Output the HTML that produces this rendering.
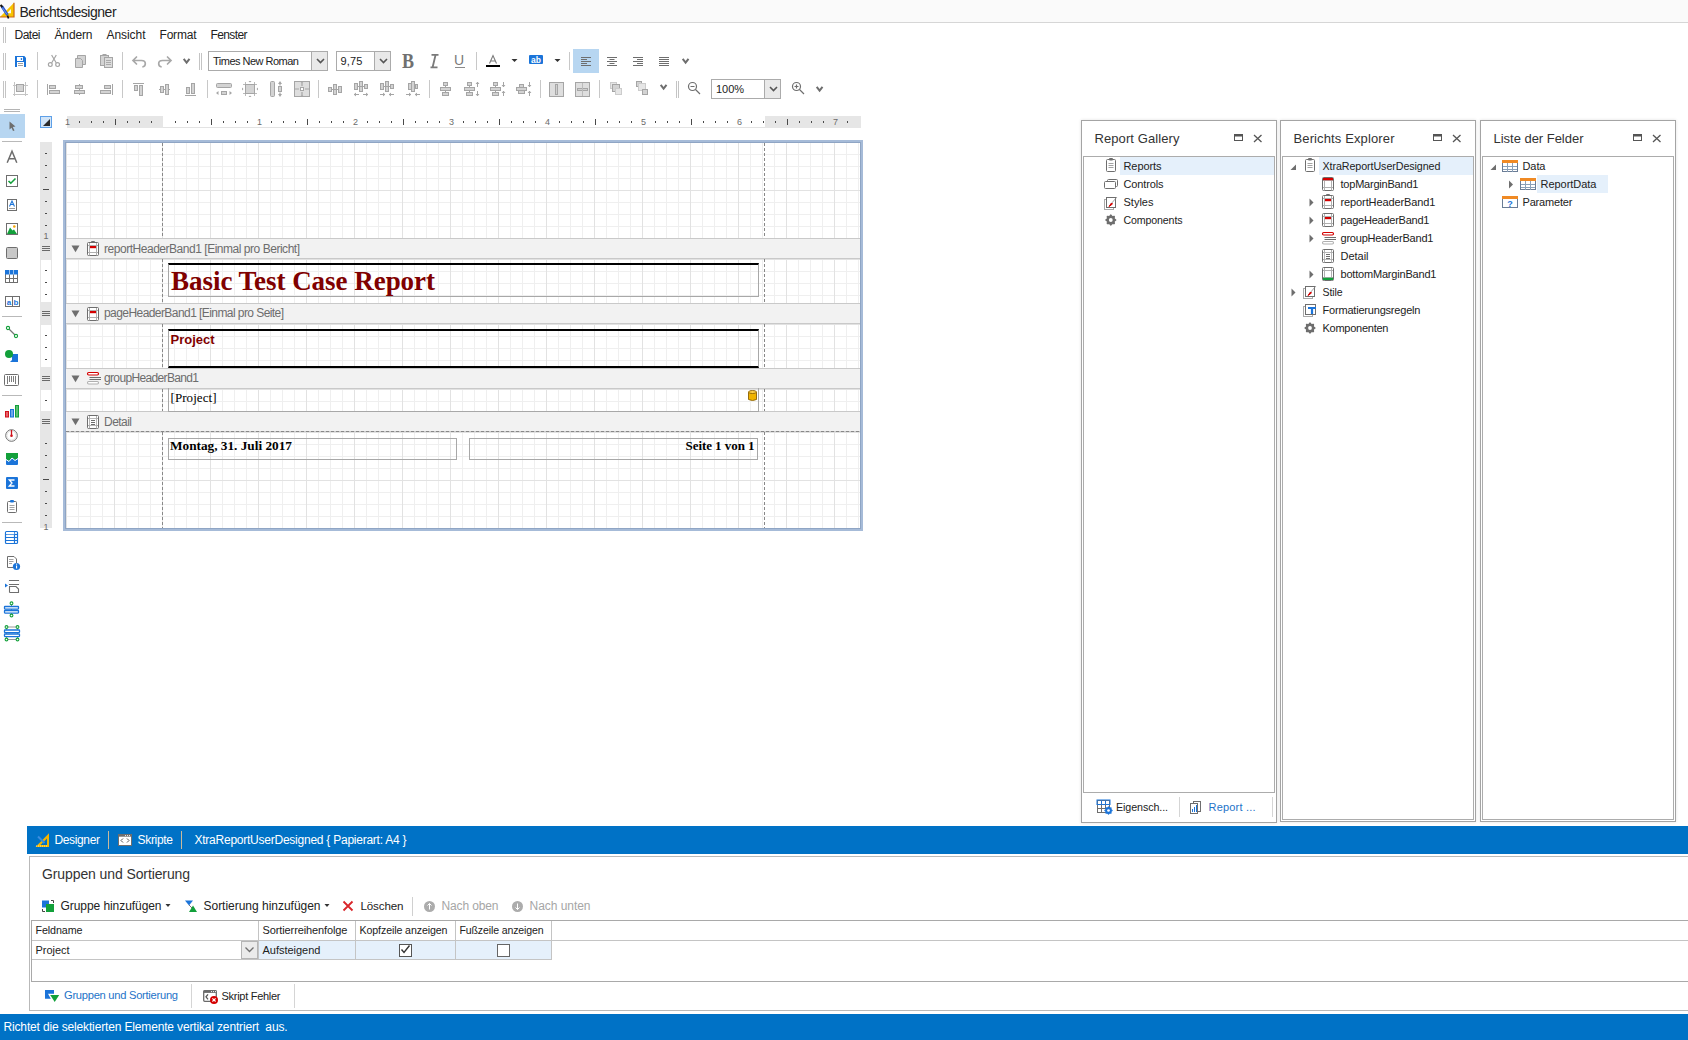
<!DOCTYPE html><html><head><meta charset="utf-8"><style>
html,body{margin:0;padding:0;}
body{width:1688px;height:1040px;position:relative;overflow:hidden;background:#fff;font-family:"Liberation Sans",sans-serif;}
div,svg{position:absolute;box-sizing:border-box;}
</style></head><body>
<div style="left:0px;top:0px;width:1688px;height:22px;background:#fafafa"></div>
<div style="left:0px;top:22px;width:1688px;height:1px;background:#d6d6d6"></div>
<div style="left:19.5px;top:4.33px;font:14px 'Liberation Sans', sans-serif;color:#222;white-space:pre;letter-spacing:-0.482px;">Berichtsdesigner</div>
<div style="left:3px;top:27px;width:1px;height:16px;background:#c4c4c4"></div>
<div style="left:5px;top:27px;width:1px;height:16px;background:#c4c4c4"></div>
<div style="left:14.5px;top:28.14px;font:12px 'Liberation Sans', sans-serif;color:#222;white-space:pre;letter-spacing:-0.504px;">Datei</div>
<div style="left:54.5px;top:28.14px;font:12px 'Liberation Sans', sans-serif;color:#222;white-space:pre;letter-spacing:-0.138px;">Ändern</div>
<div style="left:106.5px;top:28.14px;font:12px 'Liberation Sans', sans-serif;color:#222;white-space:pre;letter-spacing:-0.057px;">Ansicht</div>
<div style="left:159.5px;top:28.14px;font:12px 'Liberation Sans', sans-serif;color:#222;white-space:pre;letter-spacing:-0.200px;">Format</div>
<div style="left:210.5px;top:28.14px;font:12px 'Liberation Sans', sans-serif;color:#222;white-space:pre;letter-spacing:-0.612px;">Fenster</div>
<div style="left:3px;top:53px;width:1px;height:17px;background:#c4c4c4"></div>
<div style="left:5px;top:53px;width:1px;height:17px;background:#c4c4c4"></div>
<div style="left:199px;top:53px;width:1px;height:17px;background:#c4c4c4"></div>
<div style="left:201px;top:53px;width:1px;height:17px;background:#c4c4c4"></div>
<div style="left:37px;top:52px;width:1px;height:18px;background:#c8c8c8"></div>
<div style="left:122px;top:52px;width:1px;height:18px;background:#c8c8c8"></div>
<div style="left:476px;top:52px;width:1px;height:18px;background:#c8c8c8"></div>
<div style="left:569px;top:52px;width:1px;height:18px;background:#c8c8c8"></div>
<div style="left:3px;top:81px;width:1px;height:17px;background:#c4c4c4"></div>
<div style="left:5px;top:81px;width:1px;height:17px;background:#c4c4c4"></div>
<div style="left:676px;top:81px;width:1px;height:17px;background:#c4c4c4"></div>
<div style="left:678px;top:81px;width:1px;height:17px;background:#c4c4c4"></div>
<div style="left:37px;top:80px;width:1px;height:18px;background:#c8c8c8"></div>
<div style="left:122px;top:80px;width:1px;height:18px;background:#c8c8c8"></div>
<div style="left:207px;top:80px;width:1px;height:18px;background:#c8c8c8"></div>
<div style="left:318px;top:80px;width:1px;height:18px;background:#c8c8c8"></div>
<div style="left:429px;top:80px;width:1px;height:18px;background:#c8c8c8"></div>
<div style="left:540px;top:80px;width:1px;height:18px;background:#c8c8c8"></div>
<div style="left:599px;top:80px;width:1px;height:18px;background:#c8c8c8"></div>
<div style="left:208px;top:51px;width:120px;height:20px;border:1px solid #ababab;background:#fff"></div>
<div style="left:311px;top:51px;width:17px;height:20px;border:1px solid #ababab;background:#e9e9e9"></div>
<svg style="left:315.5px;top:58.0px" width="9" height="6" viewBox="0 0 9 6"><path d="M1 1 L4.5 4.5 L8 1" stroke="#555" stroke-width="1.6" fill="none"/></svg>
<div style="left:213px;top:55.05px;font:11px 'Liberation Sans', sans-serif;color:#222;white-space:pre;letter-spacing:-0.509px;">Times New Roman</div>
<div style="left:336px;top:51px;width:55px;height:20px;border:1px solid #ababab;background:#fff"></div>
<div style="left:374px;top:51px;width:17px;height:20px;border:1px solid #ababab;background:#e9e9e9"></div>
<svg style="left:378.5px;top:58.0px" width="9" height="6" viewBox="0 0 9 6"><path d="M1 1 L4.5 4.5 L8 1" stroke="#555" stroke-width="1.6" fill="none"/></svg>
<div style="left:340.5px;top:55.05px;font:11px 'Liberation Sans', sans-serif;color:#222;white-space:pre;letter-spacing:0.188px;">9,75</div>
<div style="left:711px;top:79px;width:70px;height:20px;border:1px solid #ababab;background:#fff"></div>
<div style="left:764px;top:79px;width:17px;height:20px;border:1px solid #ababab;background:#e9e9e9"></div>
<svg style="left:768.5px;top:86.0px" width="9" height="6" viewBox="0 0 9 6"><path d="M1 1 L4.5 4.5 L8 1" stroke="#555" stroke-width="1.6" fill="none"/></svg>
<div style="left:716px;top:83.05px;font:11px 'Liberation Sans', sans-serif;color:#222;white-space:pre;letter-spacing:-0.052px;">100%</div>
<div style="left:573px;top:49px;width:26px;height:24px;background:#b7d6f1"></div>
<div style="left:4px;top:109px;width:16px;height:1px;background:#b4b4b4"></div>
<div style="left:4px;top:111px;width:16px;height:1px;background:#b4b4b4"></div>
<div style="left:0px;top:114px;width:25px;height:24px;background:#b7d6f1"></div>
<div style="left:2px;top:141px;width:20px;height:1px;background:#b9b9b9"></div>
<div style="left:2px;top:316px;width:20px;height:1px;background:#b9b9b9"></div>
<div style="left:2px;top:395px;width:20px;height:1px;background:#b9b9b9"></div>
<div style="left:2px;top:522px;width:20px;height:1px;background:#b9b9b9"></div>
<div style="left:40px;top:116px;width:12px;height:12px;background:#cfe3f7;border:1px solid #5b9bd5"></div>
<div style="left:67px;top:116px;width:794px;height:12px;background:#fff;border-bottom:1px solid #e3e3e3"></div>
<div style="left:67px;top:116px;width:96px;height:12px;background:#e6e6e6"></div>
<div style="left:765px;top:116px;width:96px;height:12px;background:#e6e6e6"></div>
<div style="left:40px;top:142px;width:12px;height:386px;background:#e6e6e6"></div>
<div style="left:41px;top:260px;width:10px;height:42px;background:#fff"></div>
<div style="left:41px;top:325px;width:10px;height:42px;background:#fff"></div>
<div style="left:41px;top:390px;width:10px;height:21px;background:#fff"></div>
<div style="left:63px;top:140px;width:800px;height:391px;border:2px solid #a6bbd8;box-shadow:inset 0 0 0 1px #8fa5c4;background:#fff"></div>
<div style="left:66px;top:143px;width:794px;height:95px;background-image:linear-gradient(to right,#e2e2e2 1px,transparent 1px),linear-gradient(to bottom,#e2e2e2 1px,transparent 1px),linear-gradient(to right,#efefef 1px,transparent 1px),linear-gradient(to bottom,#efefef 1px,transparent 1px);background-size:48px 100%,100% 48px,12px 100%,100% 12px;background-position:0 0,0 -1px,0 0,0 -1px"></div>
<div style="left:66px;top:259px;width:794px;height:44px;background-image:linear-gradient(to right,#e2e2e2 1px,transparent 1px),linear-gradient(to bottom,#e2e2e2 1px,transparent 1px),linear-gradient(to right,#efefef 1px,transparent 1px),linear-gradient(to bottom,#efefef 1px,transparent 1px);background-size:48px 100%,100% 48px,12px 100%,100% 12px;background-position:0 0,0 0px,0 0,0 0px"></div>
<div style="left:66px;top:324px;width:794px;height:44px;background-image:linear-gradient(to right,#e2e2e2 1px,transparent 1px),linear-gradient(to bottom,#e2e2e2 1px,transparent 1px),linear-gradient(to right,#efefef 1px,transparent 1px),linear-gradient(to bottom,#efefef 1px,transparent 1px);background-size:48px 100%,100% 48px,12px 100%,100% 12px;background-position:0 0,0 0px,0 0,0 0px"></div>
<div style="left:66px;top:389px;width:794px;height:22px;background-image:linear-gradient(to right,#e2e2e2 1px,transparent 1px),linear-gradient(to bottom,#e2e2e2 1px,transparent 1px),linear-gradient(to right,#efefef 1px,transparent 1px),linear-gradient(to bottom,#efefef 1px,transparent 1px);background-size:48px 100%,100% 48px,12px 100%,100% 12px;background-position:0 0,0 0px,0 0,0 0px"></div>
<div style="left:66px;top:432px;width:794px;height:96px;background-image:linear-gradient(to right,#e2e2e2 1px,transparent 1px),linear-gradient(to bottom,#e2e2e2 1px,transparent 1px),linear-gradient(to right,#efefef 1px,transparent 1px),linear-gradient(to bottom,#efefef 1px,transparent 1px);background-size:48px 100%,100% 48px,12px 100%,100% 12px;background-position:0 0,0 0px,0 0,0 0px"></div>
<div style="left:66px;top:238px;width:794px;height:21px;background:#f2f2f2;border-top:1px solid #c9c9c9;border-bottom:1px solid #c9c9c9"></div>
<svg style="left:71px;top:245px" width="9" height="8" viewBox="0 0 9 8"><path d="M0.5 0.5 H8.5 L4.5 7.2 Z" fill="#6e6e6e"/></svg>
<div style="left:66px;top:303px;width:794px;height:21px;background:#f2f2f2;border-top:1px solid #c9c9c9;border-bottom:1px solid #c9c9c9"></div>
<svg style="left:71px;top:310px" width="9" height="8" viewBox="0 0 9 8"><path d="M0.5 0.5 H8.5 L4.5 7.2 Z" fill="#6e6e6e"/></svg>
<div style="left:66px;top:368px;width:794px;height:21px;background:#f2f2f2;border-top:1px solid #c9c9c9;border-bottom:1px solid #c9c9c9"></div>
<svg style="left:71px;top:375px" width="9" height="8" viewBox="0 0 9 8"><path d="M0.5 0.5 H8.5 L4.5 7.2 Z" fill="#6e6e6e"/></svg>
<div style="left:66px;top:411px;width:794px;height:21px;background:#f2f2f2;border-top:1px solid #c9c9c9;border-bottom:1px solid #c9c9c9"></div>
<svg style="left:71px;top:418px" width="9" height="8" viewBox="0 0 9 8"><path d="M0.5 0.5 H8.5 L4.5 7.2 Z" fill="#6e6e6e"/></svg>
<div style="left:162px;top:143px;width:1px;height:95px;background:repeating-linear-gradient(to bottom,#888888 0 3px,transparent 3px 5px)"></div>
<div style="left:764px;top:143px;width:1px;height:95px;background:repeating-linear-gradient(to bottom,#888888 0 3px,transparent 3px 5px)"></div>
<div style="left:162px;top:259px;width:1px;height:44px;background:repeating-linear-gradient(to bottom,#888888 0 3px,transparent 3px 5px)"></div>
<div style="left:764px;top:259px;width:1px;height:44px;background:repeating-linear-gradient(to bottom,#888888 0 3px,transparent 3px 5px)"></div>
<div style="left:162px;top:324px;width:1px;height:44px;background:repeating-linear-gradient(to bottom,#888888 0 3px,transparent 3px 5px)"></div>
<div style="left:764px;top:324px;width:1px;height:44px;background:repeating-linear-gradient(to bottom,#888888 0 3px,transparent 3px 5px)"></div>
<div style="left:162px;top:389px;width:1px;height:22px;background:repeating-linear-gradient(to bottom,#888888 0 3px,transparent 3px 5px)"></div>
<div style="left:764px;top:389px;width:1px;height:22px;background:repeating-linear-gradient(to bottom,#888888 0 3px,transparent 3px 5px)"></div>
<div style="left:162px;top:432px;width:1px;height:96px;background:repeating-linear-gradient(to bottom,#888888 0 3px,transparent 3px 5px)"></div>
<div style="left:764px;top:432px;width:1px;height:96px;background:repeating-linear-gradient(to bottom,#888888 0 3px,transparent 3px 5px)"></div>
<div style="left:66px;top:431px;width:794px;height:1px;background:repeating-linear-gradient(to right,#888888 0 3px,transparent 3px 5px)"></div>
<div style="left:104px;top:242.14px;font:12px 'Liberation Sans', sans-serif;color:#6d6d6d;white-space:pre;letter-spacing:-0.470px;">reportHeaderBand1 [Einmal pro Bericht]</div>
<div style="left:104px;top:306.14px;font:12px 'Liberation Sans', sans-serif;color:#6d6d6d;white-space:pre;letter-spacing:-0.568px;">pageHeaderBand1 [Einmal pro Seite]</div>
<div style="left:104px;top:371.14px;font:12px 'Liberation Sans', sans-serif;color:#6d6d6d;white-space:pre;letter-spacing:-0.649px;">groupHeaderBand1</div>
<div style="left:104px;top:415.14px;font:12px 'Liberation Sans', sans-serif;color:#6d6d6d;white-space:pre;letter-spacing:-0.537px;">Detail</div>
<div style="left:168px;top:263px;width:591px;height:34px;border:1px solid #a8a8a8;border-top:2px solid #000"></div>
<div style="left:171px;top:266.24px;font:bold 27px 'Liberation Serif', serif;color:#800000;white-space:pre;letter-spacing:-0.034px;">Basic Test Case Report</div>
<div style="left:168px;top:329px;width:591px;height:39px;border:1px solid #a8a8a8;border-top:2px solid #000;border-bottom:2px solid #000"></div>
<div style="left:170.5px;top:331.74px;font:bold 13px 'Liberation Sans', sans-serif;color:#800000;white-space:pre;letter-spacing:-0.013px;">Project</div>
<div style="left:168px;top:388px;width:591px;height:24px;border:1px solid #a8a8a8;border-top:none"></div>
<div style="left:170.5px;top:390.42px;font:13px 'Liberation Serif', serif;color:#000;white-space:pre;letter-spacing:0.066px;">[Project]</div>
<div style="left:168px;top:438px;width:289px;height:22px;border:1px solid #a8a8a8"></div>
<div style="left:170px;top:438.15px;font:bold 13.3px 'Liberation Serif', serif;color:#000;white-space:pre;letter-spacing:-0.016px;">Montag, 31. Juli 2017</div>
<div style="left:469px;top:438px;width:289px;height:22px;border:1px solid #a8a8a8"></div>
<div style="left:685.5px;top:438.42px;font:bold 13px 'Liberation Serif', serif;color:#000;white-space:pre;letter-spacing:-0.057px;">Seite 1 von 1</div>
<div style="left:1081px;top:120px;width:196px;height:703px;border:1px solid #a4a4a4;background:#fff;box-shadow:0 0 3px rgba(0,0,0,0.12)"></div>
<div style="left:1083px;top:156px;width:192px;height:637px;border:1px solid #acacac;background:#fff"></div>
<div style="left:1094.5px;top:131.24px;font:13px 'Liberation Sans', sans-serif;color:#333;white-space:pre;letter-spacing:0.090px;">Report Gallery</div>
<svg style="left:1234px;top:134px" width="10" height="8" viewBox="0 0 10 8"><rect x="0.5" y="0.5" width="8" height="6" fill="none" stroke="#555"/><rect x="0.5" y="0.5" width="8" height="2" fill="#555"/></svg>
<svg style="left:1253px;top:134px" width="10" height="9" viewBox="0 0 10 9"><path d="M1 1 L8.5 8 M8.5 1 L1 8" stroke="#555" stroke-width="1.3"/></svg>
<div style="left:1280px;top:120px;width:196px;height:702px;border:1px solid #a4a4a4;background:#fff;box-shadow:0 0 3px rgba(0,0,0,0.12)"></div>
<div style="left:1282px;top:156px;width:192px;height:664px;border:1px solid #acacac;background:#fff"></div>
<div style="left:1293.5px;top:131.24px;font:13px 'Liberation Sans', sans-serif;color:#333;white-space:pre;letter-spacing:0.125px;">Berichts Explorer</div>
<svg style="left:1433px;top:134px" width="10" height="8" viewBox="0 0 10 8"><rect x="0.5" y="0.5" width="8" height="6" fill="none" stroke="#555"/><rect x="0.5" y="0.5" width="8" height="2" fill="#555"/></svg>
<svg style="left:1452px;top:134px" width="10" height="9" viewBox="0 0 10 9"><path d="M1 1 L8.5 8 M8.5 1 L1 8" stroke="#555" stroke-width="1.3"/></svg>
<div style="left:1480px;top:120px;width:196px;height:702px;border:1px solid #a4a4a4;background:#fff;box-shadow:0 0 3px rgba(0,0,0,0.12)"></div>
<div style="left:1482px;top:156px;width:192px;height:664px;border:1px solid #acacac;background:#fff"></div>
<div style="left:1493.5px;top:131.24px;font:13px 'Liberation Sans', sans-serif;color:#333;white-space:pre;letter-spacing:-0.023px;">Liste der Felder</div>
<svg style="left:1633px;top:134px" width="10" height="8" viewBox="0 0 10 8"><rect x="0.5" y="0.5" width="8" height="6" fill="none" stroke="#555"/><rect x="0.5" y="0.5" width="8" height="2" fill="#555"/></svg>
<svg style="left:1652px;top:134px" width="10" height="9" viewBox="0 0 10 9"><path d="M1 1 L8.5 8 M8.5 1 L1 8" stroke="#555" stroke-width="1.3"/></svg>
<div style="left:1120px;top:157px;width:154px;height:18px;background:#e5f0fb"></div>
<div style="left:1319px;top:157px;width:154px;height:18px;background:#e5f0fb"></div>
<div style="left:1537px;top:175px;width:71px;height:18px;background:#e5f0fb"></div>
<div style="left:1123.5px;top:160.04px;font:11px 'Liberation Sans', sans-serif;color:#222;white-space:pre;letter-spacing:-0.089px;">Reports</div>
<div style="left:1123.5px;top:178.04px;font:11px 'Liberation Sans', sans-serif;color:#222;white-space:pre;letter-spacing:-0.138px;">Controls</div>
<div style="left:1123.5px;top:196.04px;font:11px 'Liberation Sans', sans-serif;color:#222;white-space:pre;letter-spacing:0.006px;">Styles</div>
<div style="left:1123.5px;top:214.37px;font:10.64px 'Liberation Sans', sans-serif;color:#222;white-space:pre;letter-spacing:-0.135px;">Components</div>
<div style="left:1322.5px;top:160.29px;font:10.73px 'Liberation Sans', sans-serif;color:#222;white-space:pre;letter-spacing:-0.086px;">XtraReportUserDesigned</div>
<div style="left:1340.5px;top:178.04px;font:11px 'Liberation Sans', sans-serif;color:#222;white-space:pre;letter-spacing:-0.214px;">topMarginBand1</div>
<div style="left:1340.5px;top:196.04px;font:11px 'Liberation Sans', sans-serif;color:#222;white-space:pre;letter-spacing:-0.105px;">reportHeaderBand1</div>
<div style="left:1340.5px;top:214.04px;font:11px 'Liberation Sans', sans-serif;color:#222;white-space:pre;letter-spacing:-0.246px;">pageHeaderBand1</div>
<div style="left:1340.5px;top:232.04px;font:11px 'Liberation Sans', sans-serif;color:#222;white-space:pre;letter-spacing:-0.206px;">groupHeaderBand1</div>
<div style="left:1340.5px;top:250.04px;font:11px 'Liberation Sans', sans-serif;color:#222;white-space:pre;letter-spacing:-0.025px;">Detail</div>
<div style="left:1340.5px;top:268.05px;font:11px 'Liberation Sans', sans-serif;color:#222;white-space:pre;letter-spacing:-0.195px;">bottomMarginBand1</div>
<div style="left:1322.5px;top:286.44px;font:10.56px 'Liberation Sans', sans-serif;color:#222;white-space:pre;letter-spacing:-0.129px;">Stile</div>
<div style="left:1322.5px;top:304.05px;font:11px 'Liberation Sans', sans-serif;color:#222;white-space:pre;letter-spacing:-0.196px;">Formatierungsregeln</div>
<div style="left:1322.5px;top:322.05px;font:11px 'Liberation Sans', sans-serif;color:#222;white-space:pre;letter-spacing:-0.256px;">Komponenten</div>
<div style="left:1522.5px;top:160.04px;font:11px 'Liberation Sans', sans-serif;color:#222;white-space:pre;letter-spacing:-0.083px;">Data</div>
<div style="left:1540.5px;top:178.04px;font:11px 'Liberation Sans', sans-serif;color:#222;white-space:pre;letter-spacing:-0.031px;">ReportData</div>
<div style="left:1522.5px;top:196.04px;font:11px 'Liberation Sans', sans-serif;color:#222;white-space:pre;letter-spacing:-0.172px;">Parameter</div>
<div style="left:1116px;top:801.32px;font:10.7px 'Liberation Sans', sans-serif;color:#222;white-space:pre;letter-spacing:-0.084px;">Eigensch...</div>
<div style="left:1179px;top:797px;width:1px;height:20px;background:#d5d5d5"></div>
<div style="left:1208.5px;top:801.04px;font:11px 'Liberation Sans', sans-serif;color:#1e73c8;white-space:pre;letter-spacing:0.191px;">Report ...</div>
<div style="left:1272px;top:797px;width:1px;height:20px;background:#d5d5d5"></div>
<div style="left:27px;top:826px;width:1661px;height:28px;background:#0072c6"></div>
<div style="left:54.5px;top:833.14px;font:12px 'Liberation Sans', sans-serif;color:#fff;white-space:pre;letter-spacing:-0.362px;">Designer</div>
<div style="left:108px;top:831px;width:1px;height:18px;background:#c8b99c"></div>
<div style="left:137.5px;top:833.14px;font:12px 'Liberation Sans', sans-serif;color:#fff;white-space:pre;letter-spacing:-0.307px;">Skripte</div>
<div style="left:181px;top:831px;width:1px;height:18px;background:#c8b99c"></div>
<div style="left:194.5px;top:833.14px;font:12px 'Liberation Sans', sans-serif;color:#fff;white-space:pre;letter-spacing:-0.242px;">XtraReportUserDesigned { Papierart: A4 }</div>
<div style="left:29px;top:856px;width:1680px;height:155px;border:1px solid #b9b9b9;border-right:none;background:#fff"></div>
<div style="left:42px;top:866.33px;font:14px 'Liberation Sans', sans-serif;color:#333;white-space:pre;letter-spacing:-0.102px;">Gruppen und Sortierung</div>
<div style="left:60.5px;top:899.14px;font:12px 'Liberation Sans', sans-serif;color:#222;white-space:pre;letter-spacing:-0.065px;">Gruppe hinzufügen</div>
<div style="left:203.5px;top:899.14px;font:12px 'Liberation Sans', sans-serif;color:#222;white-space:pre;letter-spacing:-0.020px;">Sortierung hinzufügen</div>
<div style="left:360.5px;top:899.48px;font:11.62px 'Liberation Sans', sans-serif;color:#222;white-space:pre;letter-spacing:-0.148px;">Löschen</div>
<div style="left:412px;top:897px;width:1px;height:19px;background:#d0d0d0"></div>
<div style="left:441.5px;top:899.14px;font:12px 'Liberation Sans', sans-serif;color:#a6a6a6;white-space:pre;letter-spacing:-0.129px;">Nach oben</div>
<div style="left:529.5px;top:899.14px;font:12px 'Liberation Sans', sans-serif;color:#a6a6a6;white-space:pre;letter-spacing:-0.040px;">Nach unten</div>
<div style="left:31px;top:920px;width:1657px;height:62px;border:1px solid #a9a9a9;border-right:none;background:#fff"></div>
<div style="left:32px;top:940px;width:1656px;height:1px;background:#c4c4c4"></div>
<div style="left:258px;top:941px;width:294px;height:18px;background:#e5f0fb"></div>
<div style="left:32px;top:959px;width:520px;height:1px;background:#c4c4c4"></div>
<div style="left:258px;top:921px;width:1px;height:38px;background:#c4c4c4"></div>
<div style="left:355px;top:921px;width:1px;height:38px;background:#c4c4c4"></div>
<div style="left:455px;top:921px;width:1px;height:38px;background:#c4c4c4"></div>
<div style="left:551px;top:921px;width:1px;height:38px;background:#c4c4c4"></div>
<div style="left:35.5px;top:924.28px;font:10.74px 'Liberation Sans', sans-serif;color:#222;white-space:pre;letter-spacing:-0.105px;">Feldname</div>
<div style="left:262.5px;top:924.04px;font:11px 'Liberation Sans', sans-serif;color:#222;white-space:pre;letter-spacing:-0.110px;">Sortierreihenfolge</div>
<div style="left:359.5px;top:924.37px;font:10.64px 'Liberation Sans', sans-serif;color:#222;white-space:pre;letter-spacing:-0.104px;">Kopfzeile anzeigen</div>
<div style="left:459.5px;top:924.44px;font:10.56px 'Liberation Sans', sans-serif;color:#222;white-space:pre;letter-spacing:-0.134px;">Fußzeile anzeigen</div>
<div style="left:35.5px;top:944.04px;font:11px 'Liberation Sans', sans-serif;color:#222;white-space:pre;letter-spacing:-0.042px;">Project</div>
<div style="left:262.5px;top:944.04px;font:11px 'Liberation Sans', sans-serif;color:#222;white-space:pre;letter-spacing:-0.016px;">Aufsteigend</div>
<div style="left:241px;top:941px;width:17px;height:18px;border:1px solid #b5b5b5;background:#ebebeb"></div>
<div style="left:399px;top:944px;width:13px;height:13px;border:1px solid #555;background:#fff"></div>
<div style="left:497px;top:944px;width:13px;height:13px;border:1px solid #666;background:#fff"></div>
<div style="left:64px;top:989.40px;font:11.16px 'Liberation Sans', sans-serif;color:#1e73c8;white-space:pre;letter-spacing:-0.270px;">Gruppen und Sortierung</div>
<div style="left:191px;top:984px;width:1px;height:24px;background:#d5d5d5"></div>
<div style="left:221.5px;top:989.53px;font:11.02px 'Liberation Sans', sans-serif;color:#222;white-space:pre;letter-spacing:-0.289px;">Skript Fehler</div>
<div style="left:294px;top:984px;width:1px;height:24px;background:#d5d5d5"></div>
<div style="left:0px;top:1014px;width:1688px;height:26px;background:#0072c6"></div>
<div style="left:3.5px;top:1019.64px;font:12px 'Liberation Sans', sans-serif;color:#fff;white-space:pre;letter-spacing:-0.153px;">Richtet die selektierten Elemente vertikal zentriert  aus.</div>
<div style="left:401.5px;top:50.18px;font:bold 20px 'Liberation Serif', serif;color:#707070;white-space:pre;transform:scaleX(0.9);transform-origin:left">B</div>
<div style="left:454px;top:52.33px;font:14px 'Liberation Sans', sans-serif;color:#7a7a7a;white-space:pre;">U</div>
<svg style="left:0;top:0" width="1688" height="1040"><path d="M0 17 L14 2.8 V17 Z" fill="#f7c400"/><path d="M14 2.8 V17 H0" stroke="#c8641a" stroke-width="1.2" fill="none"/><path d="M6.8 13.2 L11 9 V13.2 Z" fill="#f9f9f9"/><path d="M2 6.5 L7.5 15" stroke="#2553c9" stroke-width="2.8"/><path d="M2.3 7.5 L7 14.5" stroke="#7fa6f0" stroke-width="0.8"/><path d="M0.5 5 L2.5 7" stroke="#111" stroke-width="2.2"/><path d="M7.5 15.5 L8.5 18.5" stroke="#111" stroke-width="1.6"/><path d="M15 56 H24.3 L26 57.7 V67 H15 Z" fill="#1b74d9"/><rect x="17" y="57" width="6" height="4" fill="#fff"/><rect x="20.8" y="58" width="1.3" height="2.1" rx="0.6" fill="#1b74d9"/><rect x="17" y="62" width="7" height="5" fill="#fff"/><rect x="18" y="63" width="5" height="1" fill="#a0a0a0"/><rect x="18" y="65" width="5" height="1" fill="#a0a0a0"/><g stroke="#a5a5a5" stroke-width="1.2" fill="none"><circle cx="50.3" cy="64.6" r="1.9"/><circle cx="57.6" cy="64.6" r="1.9"/><path d="M51.6 63 L56.3 55 M56.3 63 L51.6 55"/></g><g stroke="#a5a5a5" stroke-width="1" fill="#d3d3d3"><path d="M77.5 55.5 H85.5 V64.5 H77.5 Z"/><path d="M75.5 58.5 H80.5 L82.5 60.5 V67.5 H75.5 Z"/></g><g stroke="#a5a5a5" stroke-width="1" fill="#d3d3d3"><rect x="100.5" y="55.5" width="8" height="10"/><rect x="102.5" y="54" width="4" height="2" fill="#a5a5a5" stroke="none"/><rect x="104.5" y="57.5" width="8" height="10" fill="#dcdcdc"/></g><g stroke="#a5a5a5" stroke-width="0.9"><path d="M106 60.5 H111 M106 62.5 H111 M106 64.5 H111"/></g><g stroke="#a8a8a8" stroke-width="1.7" fill="none" stroke-linecap="round"><path d="M136.5 57 L133 60.5 L136.5 64 M133.5 60.5 H141.5 Q145.3 60.5 145.3 63.7 Q145.3 66 143 66.8"/><path d="M167.5 57 L171 60.5 L167.5 64 M170.5 60.5 H162.5 Q158.7 60.5 158.7 63.7 Q158.7 66 161 66.8"/></g><path d="M183.7 58.8 L186.6 62.6 L189.5 58.8" stroke="#6e6e6e" stroke-width="2" fill="none"/><path d="M682.7 58.8 L685.6 62.6 L688.5 58.8" stroke="#6e6e6e" stroke-width="2" fill="none"/><path d="M660.7 84.8 L663.6 88.6 L666.5 84.8" stroke="#6e6e6e" stroke-width="2" fill="none"/><path d="M816.7 86.8 L819.6 90.6 L822.5 86.8" stroke="#6e6e6e" stroke-width="2" fill="none"/><rect x="455" y="67" width="10" height="1" fill="#8a8a8a"/><rect x="486" y="65" width="14" height="2" fill="#000"/><path d="M489.5 63.5 L493 55.5 L496.5 63.5 M490.8 61 H495.2" stroke="#7a7a7a" stroke-width="1.1" fill="none"/><path d="M511.5 59 H517.5 L514.5 62 Z" fill="#333"/><path d="M554.5 59 H560.5 L557.5 62 Z" fill="#333"/><rect x="529" y="55" width="14" height="9" rx="1" fill="#1b74d9"/><rect x="581" y="57" width="10" height="1" fill="#6e6e6e"/><rect x="581" y="59" width="6" height="1" fill="#6e6e6e"/><rect x="581" y="61" width="10" height="1" fill="#6e6e6e"/><rect x="581" y="63" width="6" height="1" fill="#6e6e6e"/><rect x="581" y="65" width="10" height="1" fill="#6e6e6e"/><rect x="607" y="57" width="10" height="1" fill="#6e6e6e"/><rect x="609.5" y="59" width="5" height="1" fill="#6e6e6e"/><rect x="607" y="61" width="10" height="1" fill="#6e6e6e"/><rect x="609.5" y="63" width="5" height="1" fill="#6e6e6e"/><rect x="607" y="65" width="10" height="1" fill="#6e6e6e"/><rect x="633" y="57" width="10" height="1" fill="#6e6e6e"/><rect x="637" y="59" width="6" height="1" fill="#6e6e6e"/><rect x="633" y="61" width="10" height="1" fill="#6e6e6e"/><rect x="637" y="63" width="6" height="1" fill="#6e6e6e"/><rect x="633" y="65" width="10" height="1" fill="#6e6e6e"/><rect x="659" y="57" width="10" height="1" fill="#6e6e6e"/><rect x="659" y="59" width="10" height="1" fill="#6e6e6e"/><rect x="659" y="61" width="10" height="1" fill="#6e6e6e"/><rect x="659" y="63" width="10" height="1" fill="#6e6e6e"/><rect x="659" y="65" width="10" height="1" fill="#6e6e6e"/><rect x="16.5" y="84.5" width="7" height="7" fill="#d3d3d3" stroke="#a5a5a5"/><path d="M13 85.5 L28 85.5" stroke="#c4c4c4" stroke-width="1"/><path d="M13 94.5 L28 94.5" stroke="#c4c4c4" stroke-width="1"/><path d="M14.5 82 L14.5 96" stroke="#c4c4c4" stroke-width="1"/><path d="M25.5 82 L25.5 96" stroke="#c4c4c4" stroke-width="1"/><rect x="16.5" y="84.5" width="7" height="7" fill="#d3d3d3" stroke="#a5a5a5"/><path d="M47.5 84 L47.5 95" stroke="#a5a5a5" stroke-width="1"/><rect x="49.5" y="85.5" width="6" height="3" fill="#d3d3d3" stroke="#a5a5a5"/><rect x="49.5" y="90.5" width="10" height="3" fill="#d3d3d3" stroke="#a5a5a5"/><path d="M79.5 84 L79.5 95" stroke="#a5a5a5" stroke-width="1"/><rect x="75.5" y="85.5" width="7" height="3" fill="#d3d3d3" stroke="#a5a5a5"/><rect x="74.5" y="90.5" width="10" height="3" fill="#d3d3d3" stroke="#a5a5a5"/><path d="M112.5 84 L112.5 95" stroke="#a5a5a5" stroke-width="1"/><rect x="104.5" y="85.5" width="6" height="3" fill="#d3d3d3" stroke="#a5a5a5"/><rect x="100.5" y="90.5" width="10" height="3" fill="#d3d3d3" stroke="#a5a5a5"/><path d="M133 83.5 L144 83.5" stroke="#a5a5a5" stroke-width="1"/><rect x="134.5" y="85.5" width="3" height="5" fill="#d3d3d3" stroke="#a5a5a5"/><rect x="139.5" y="85.5" width="3" height="10" fill="#d3d3d3" stroke="#a5a5a5"/><path d="M159 89.5 L170 89.5" stroke="#a5a5a5" stroke-width="1"/><rect x="160.5" y="86.5" width="3" height="6" fill="#d3d3d3" stroke="#a5a5a5"/><rect x="165.5" y="84.5" width="3" height="10" fill="#d3d3d3" stroke="#a5a5a5"/><path d="M185 95.5 L196 95.5" stroke="#a5a5a5" stroke-width="1"/><rect x="186.5" y="87.5" width="3" height="6" fill="#d3d3d3" stroke="#a5a5a5"/><rect x="191.5" y="83.5" width="3" height="10" fill="#d3d3d3" stroke="#a5a5a5"/><rect x="216.5" y="83.5" width="15" height="4" rx="1" fill="#d3d3d3" stroke="#a5a5a5"/><rect x="221.5" y="91.5" width="5" height="3" fill="#d3d3d3" stroke="#a5a5a5"/><path d="M216 93 L218.5 91 V95 Z M232 93 L229.5 91 V95 Z" fill="#a5a5a5"/><path d="M243 84.5 H257 M243 93.5 H257 M245.5 82 V96 M254.5 82 V96" stroke="#bbbbbb" stroke-width="1"/><rect x="245.5" y="84.5" width="9" height="9" fill="#d3d3d3" stroke="#a5a5a5"/><path d="M248.5 81 H251.5 L250 82.5 Z M248.5 97 H251.5 L250 95.5 Z M242 87.5 V90.5 L243.5 89 Z M258 87.5 V90.5 L256.5 89 Z" fill="#a5a5a5"/><rect x="270.5" y="81.5" width="4" height="15" rx="1" fill="#d3d3d3" stroke="#a5a5a5"/><rect x="278.5" y="86.5" width="3" height="5" fill="#d3d3d3" stroke="#a5a5a5"/><path d="M278 84 L280 81 L282 84 Z M278 94 L280 97 L282 94 Z" fill="#a5a5a5"/><path d="M280 83 V85.5 M280 92.5 V95" stroke="#a5a5a5" stroke-width="1.2"/><rect x="294.5" y="81.5" width="15" height="15" fill="#dedede" stroke="#a5a5a5"/><rect x="300.5" y="87.5" width="3" height="3" fill="#fff" stroke="#a5a5a5"/><path d="M300.5 82.5 L302 81.8 L303.5 82.5 Z M300.5 95.5 L302 96.2 L303.5 95.5 Z" fill="#a5a5a5"/><path d="M302 82 V86 M302 92 V96 M295 89 H299 M305 89 H309" stroke="#a5a5a5" stroke-width="1.2"/><rect x="328.5" y="87.5" width="3" height="4" fill="#d3d3d3" stroke="#a5a5a5"/><rect x="333.5" y="84.5" width="3" height="10" fill="#d3d3d3" stroke="#a5a5a5"/><rect x="338.5" y="86.5" width="3" height="6" fill="#d3d3d3" stroke="#a5a5a5"/><path d="M331 89.5 L338 89.5" stroke="#a5a5a5" stroke-width="1"/><rect x="354.5" y="83.5" width="3" height="6" fill="#d3d3d3" stroke="#a5a5a5"/><rect x="359.5" y="81.5" width="3" height="10" fill="#d3d3d3" stroke="#a5a5a5"/><rect x="364.5" y="84.5" width="3" height="4" fill="#d3d3d3" stroke="#a5a5a5"/><path d="M358 86.5 L364 86.5" stroke="#a5a5a5" stroke-width="1"/><path d="M359 94.5 H354 M356 93.0 L354.2 94.5 L356 96.0" stroke="#a5a5a5" stroke-width="1" fill="none"/><path d="M363 94.5 H368 M366 93.0 L367.8 94.5 L366 96.0" stroke="#a5a5a5" stroke-width="1" fill="none"/><rect x="380.5" y="83.5" width="3" height="6" fill="#d3d3d3" stroke="#a5a5a5"/><rect x="385.5" y="81.5" width="3" height="10" fill="#d3d3d3" stroke="#a5a5a5"/><rect x="390.5" y="84.5" width="3" height="4" fill="#d3d3d3" stroke="#a5a5a5"/><path d="M384 86.5 L390 86.5" stroke="#a5a5a5" stroke-width="1"/><path d="M380 94.5 H385 M383 93.0 L384.8 94.5 L383 96.0" stroke="#a5a5a5" stroke-width="1" fill="none"/><path d="M394 94.5 H389 M391 93.0 L389.2 94.5 L391 96.0" stroke="#a5a5a5" stroke-width="1" fill="none"/><rect x="408.5" y="83.5" width="3" height="6" fill="#d3d3d3" stroke="#a5a5a5"/><rect x="411.5" y="81.5" width="3" height="10" fill="#d3d3d3" stroke="#a5a5a5"/><rect x="415.5" y="84.5" width="2" height="4" fill="#d3d3d3" stroke="#a5a5a5"/><path d="M406 94.5 H411 M409 93.0 L410.8 94.5 L409 96.0" stroke="#a5a5a5" stroke-width="1" fill="none"/><path d="M420 94.5 H415 M417 93.0 L415.2 94.5 L417 96.0" stroke="#a5a5a5" stroke-width="1" fill="none"/><path d="M445.5 85 L445.5 92.5" stroke="#a5a5a5" stroke-width="1"/><rect x="443.5" y="82.5" width="4" height="3" fill="#d3d3d3" stroke="#a5a5a5"/><rect x="440.5" y="87.5" width="10" height="3" fill="#d3d3d3" stroke="#a5a5a5"/><rect x="442.5" y="92.5" width="6" height="3" fill="#d3d3d3" stroke="#a5a5a5"/><path d="M469.5 85 L469.5 92.5" stroke="#a5a5a5" stroke-width="1"/><rect x="467.5" y="82.5" width="4" height="3" fill="#d3d3d3" stroke="#a5a5a5"/><rect x="464.5" y="87.5" width="10" height="3" fill="#d3d3d3" stroke="#a5a5a5"/><rect x="466.5" y="92.5" width="6" height="3" fill="#d3d3d3" stroke="#a5a5a5"/><path d="M477.5 87 V82 M476.0 84 L477.5 82.2 L479.0 84" stroke="#a5a5a5" stroke-width="1" fill="none"/><path d="M477.5 91 V96 M476.0 94 L477.5 95.8 L479.0 94" stroke="#a5a5a5" stroke-width="1" fill="none"/><path d="M495.5 85 L495.5 92.5" stroke="#a5a5a5" stroke-width="1"/><rect x="493.5" y="82.5" width="4" height="3" fill="#d3d3d3" stroke="#a5a5a5"/><rect x="490.5" y="87.5" width="10" height="3" fill="#d3d3d3" stroke="#a5a5a5"/><rect x="492.5" y="92.5" width="6" height="3" fill="#d3d3d3" stroke="#a5a5a5"/><path d="M503.5 82 V87 M502.0 85 L503.5 86.8 L505.0 85" stroke="#a5a5a5" stroke-width="1" fill="none"/><path d="M503.5 96 V91 M502.0 93 L503.5 91.2 L505.0 93" stroke="#a5a5a5" stroke-width="1" fill="none"/><rect x="519.5" y="84.5" width="4" height="3" fill="#d3d3d3" stroke="#a5a5a5"/><rect x="518.5" y="90.5" width="6" height="3" fill="#d3d3d3" stroke="#a5a5a5"/><rect x="516.5" y="87.5" width="10" height="3" fill="#d3d3d3" stroke="#a5a5a5"/><path d="M529.5 82 V87 M528.0 85 L529.5 86.8 L531.0 85" stroke="#a5a5a5" stroke-width="1" fill="none"/><path d="M529.5 96 V91 M528.0 93 L529.5 91.2 L531.0 93" stroke="#a5a5a5" stroke-width="1" fill="none"/><rect x="549.5" y="82.5" width="14" height="14" fill="#dedede" stroke="#a5a5a5"/><rect x="555.5" y="84.5" width="2" height="10" fill="#d0d0d0" stroke="#a5a5a5"/><rect x="575.5" y="82.5" width="14" height="14" fill="#dedede" stroke="#a5a5a5"/><rect x="577.5" y="88.5" width="10" height="2" fill="#d0d0d0" stroke="#a5a5a5"/><path d="M582.5 83 L582.5 96" stroke="#bbb" stroke-width="1"/><rect x="610.5" y="82.5" width="6" height="6" fill="#e6e6e6" stroke="#cccccc"/><rect x="612.5" y="84.5" width="7" height="7" fill="#d3d3d3" stroke="#a5a5a5"/><rect x="615.5" y="88.5" width="6" height="6" fill="#e6e6e6" stroke="#cccccc"/><rect x="636.5" y="81.5" width="5" height="5" fill="#d3d3d3" stroke="#a5a5a5"/><rect x="638.5" y="83.5" width="7" height="7" fill="#e6e6e6" stroke="#cccccc"/><rect x="642.5" y="89.5" width="5" height="5" fill="#d3d3d3" stroke="#a5a5a5"/><g stroke="#6e6e6e" stroke-width="1.2" fill="none"><circle cx="692.5" cy="86.5" r="4"/><path d="M695.5 89.5 L700 94 M690.5 86.5 H694.5"/><circle cx="796.5" cy="86.5" r="4"/><path d="M799.5 89.5 L804 94 M794.5 86.5 H798.5 M796.5 84.5 V88.5"/></g><path d="M431.5 54.8 H438.5 M430.5 67.3 H437.5 M435.6 54.8 L432.6 67.3" stroke="#7a7a7a" stroke-width="1.8" fill="none"/><text x="536" y="62.5" font-family="Liberation Sans" font-weight="bold" font-size="8.5" fill="#fff" text-anchor="middle">ab</text><rect x="40.5" y="116.5" width="11" height="11" fill="#d2e5f8" stroke="#5ea0e8"/><path d="M43 126 L50 119 V126 Z" fill="#2b2b2b"/><rect x="79" y="121" width="1" height="2" fill="#4a4a4a"/><rect x="91" y="121" width="1" height="2" fill="#4a4a4a"/><rect x="103" y="121" width="1" height="2" fill="#4a4a4a"/><rect x="115" y="119" width="1" height="6" fill="#4a4a4a"/><rect x="127" y="121" width="1" height="2" fill="#4a4a4a"/><rect x="139" y="121" width="1" height="2" fill="#4a4a4a"/><rect x="151" y="121" width="1" height="2" fill="#4a4a4a"/><rect x="175" y="121" width="1" height="2" fill="#4a4a4a"/><rect x="187" y="121" width="1" height="2" fill="#4a4a4a"/><rect x="199" y="121" width="1" height="2" fill="#4a4a4a"/><rect x="211" y="119" width="1" height="6" fill="#4a4a4a"/><rect x="223" y="121" width="1" height="2" fill="#4a4a4a"/><rect x="235" y="121" width="1" height="2" fill="#4a4a4a"/><rect x="247" y="121" width="1" height="2" fill="#4a4a4a"/><rect x="271" y="121" width="1" height="2" fill="#4a4a4a"/><rect x="283" y="121" width="1" height="2" fill="#4a4a4a"/><rect x="295" y="121" width="1" height="2" fill="#4a4a4a"/><rect x="307" y="119" width="1" height="6" fill="#4a4a4a"/><rect x="319" y="121" width="1" height="2" fill="#4a4a4a"/><rect x="331" y="121" width="1" height="2" fill="#4a4a4a"/><rect x="343" y="121" width="1" height="2" fill="#4a4a4a"/><rect x="367" y="121" width="1" height="2" fill="#4a4a4a"/><rect x="379" y="121" width="1" height="2" fill="#4a4a4a"/><rect x="391" y="121" width="1" height="2" fill="#4a4a4a"/><rect x="403" y="119" width="1" height="6" fill="#4a4a4a"/><rect x="415" y="121" width="1" height="2" fill="#4a4a4a"/><rect x="427" y="121" width="1" height="2" fill="#4a4a4a"/><rect x="439" y="121" width="1" height="2" fill="#4a4a4a"/><rect x="463" y="121" width="1" height="2" fill="#4a4a4a"/><rect x="475" y="121" width="1" height="2" fill="#4a4a4a"/><rect x="487" y="121" width="1" height="2" fill="#4a4a4a"/><rect x="499" y="119" width="1" height="6" fill="#4a4a4a"/><rect x="511" y="121" width="1" height="2" fill="#4a4a4a"/><rect x="523" y="121" width="1" height="2" fill="#4a4a4a"/><rect x="535" y="121" width="1" height="2" fill="#4a4a4a"/><rect x="559" y="121" width="1" height="2" fill="#4a4a4a"/><rect x="571" y="121" width="1" height="2" fill="#4a4a4a"/><rect x="583" y="121" width="1" height="2" fill="#4a4a4a"/><rect x="595" y="119" width="1" height="6" fill="#4a4a4a"/><rect x="607" y="121" width="1" height="2" fill="#4a4a4a"/><rect x="619" y="121" width="1" height="2" fill="#4a4a4a"/><rect x="631" y="121" width="1" height="2" fill="#4a4a4a"/><rect x="655" y="121" width="1" height="2" fill="#4a4a4a"/><rect x="667" y="121" width="1" height="2" fill="#4a4a4a"/><rect x="679" y="121" width="1" height="2" fill="#4a4a4a"/><rect x="691" y="119" width="1" height="6" fill="#4a4a4a"/><rect x="703" y="121" width="1" height="2" fill="#4a4a4a"/><rect x="715" y="121" width="1" height="2" fill="#4a4a4a"/><rect x="727" y="121" width="1" height="2" fill="#4a4a4a"/><rect x="751" y="121" width="1" height="2" fill="#4a4a4a"/><rect x="763" y="121" width="1" height="2" fill="#4a4a4a"/><rect x="775" y="121" width="1" height="2" fill="#4a4a4a"/><rect x="787" y="119" width="1" height="6" fill="#4a4a4a"/><rect x="799" y="121" width="1" height="2" fill="#4a4a4a"/><rect x="811" y="121" width="1" height="2" fill="#4a4a4a"/><rect x="823" y="121" width="1" height="2" fill="#4a4a4a"/><rect x="847" y="121" width="1" height="2" fill="#4a4a4a"/><text x="259.5" y="125" font-family="Liberation Sans" font-size="9" fill="#6b6b6b" text-anchor="middle">1</text><text x="355.5" y="125" font-family="Liberation Sans" font-size="9" fill="#6b6b6b" text-anchor="middle">2</text><text x="451.5" y="125" font-family="Liberation Sans" font-size="9" fill="#6b6b6b" text-anchor="middle">3</text><text x="547.5" y="125" font-family="Liberation Sans" font-size="9" fill="#6b6b6b" text-anchor="middle">4</text><text x="643.5" y="125" font-family="Liberation Sans" font-size="9" fill="#6b6b6b" text-anchor="middle">5</text><text x="739.5" y="125" font-family="Liberation Sans" font-size="9" fill="#6b6b6b" text-anchor="middle">6</text><text x="835.5" y="125" font-family="Liberation Sans" font-size="9" fill="#6b6b6b" text-anchor="middle">7</text><text x="67.5" y="125" font-family="Liberation Sans" font-size="9" fill="#6b6b6b" text-anchor="middle">1</text><rect x="45" y="153" width="2" height="1" fill="#4a4a4a"/><rect x="45" y="165" width="2" height="1" fill="#4a4a4a"/><rect x="45" y="177" width="2" height="1" fill="#4a4a4a"/><rect x="45" y="201" width="2" height="1" fill="#4a4a4a"/><rect x="45" y="213" width="2" height="1" fill="#4a4a4a"/><rect x="45" y="225" width="2" height="1" fill="#4a4a4a"/><rect x="45" y="270" width="2" height="1" fill="#4a4a4a"/><rect x="45" y="282" width="2" height="1" fill="#4a4a4a"/><rect x="45" y="294" width="2" height="1" fill="#4a4a4a"/><rect x="45" y="335" width="2" height="1" fill="#4a4a4a"/><rect x="45" y="347" width="2" height="1" fill="#4a4a4a"/><rect x="45" y="359" width="2" height="1" fill="#4a4a4a"/><rect x="45" y="400" width="2" height="1" fill="#4a4a4a"/><rect x="45" y="443" width="2" height="1" fill="#4a4a4a"/><rect x="45" y="455" width="2" height="1" fill="#4a4a4a"/><rect x="45" y="467" width="2" height="1" fill="#4a4a4a"/><rect x="45" y="491" width="2" height="1" fill="#4a4a4a"/><rect x="45" y="503" width="2" height="1" fill="#4a4a4a"/><rect x="45" y="515" width="2" height="1" fill="#4a4a4a"/><rect x="43" y="189" width="6" height="1" fill="#4a4a4a"/><rect x="43" y="479" width="6" height="1" fill="#4a4a4a"/><text x="46" y="239" font-family="Liberation Sans" font-size="9" fill="#6b6b6b" text-anchor="middle">1</text><text x="46" y="530" font-family="Liberation Sans" font-size="9" fill="#6b6b6b" text-anchor="middle">1</text><rect x="42" y="246" width="8" height="1" fill="#6a6a6a"/><rect x="42" y="248" width="8" height="1" fill="#6a6a6a"/><rect x="42" y="250" width="8" height="1" fill="#6a6a6a"/><rect x="42" y="311" width="8" height="1" fill="#6a6a6a"/><rect x="42" y="313" width="8" height="1" fill="#6a6a6a"/><rect x="42" y="315" width="8" height="1" fill="#6a6a6a"/><rect x="42" y="376" width="8" height="1" fill="#6a6a6a"/><rect x="42" y="378" width="8" height="1" fill="#6a6a6a"/><rect x="42" y="380" width="8" height="1" fill="#6a6a6a"/><rect x="42" y="419" width="8" height="1" fill="#6a6a6a"/><rect x="42" y="421" width="8" height="1" fill="#6a6a6a"/><rect x="42" y="423" width="8" height="1" fill="#6a6a6a"/><path d="M9.5 121.5 L15.5 126.5 L12.8 127 L14.5 130.5 L13 131 L11.5 127.8 L9.5 129.5 Z" fill="#6e6e6e"/><path d="M7.2 162.8 L12 151.2 L16.8 162.8 M8.8 158.8 H15.2" stroke="#6e6e6e" stroke-width="1.5" fill="none"/><rect x="6.5" y="175.5" width="11" height="11" fill="#fff" stroke="#6e6e6e"/><path d="M8.5 181 L10.8 183.2 L15.5 178.5" stroke="#12a03a" stroke-width="1.6" fill="none"/><rect x="7.5" y="199.5" width="9" height="11" fill="#fff" stroke="#6e6e6e"/><path d="M9.5 206.5 L12 201 L14.5 206.5 M10.5 204.5 H13.5" stroke="#1b74d9" stroke-width="1.1" fill="none"/><rect x="9" y="208" width="6" height="1" fill="#999"/><rect x="6.5" y="223.5" width="11" height="11" fill="#fff" stroke="#6e6e6e"/><path d="M7 234 L10 227.5 L12.5 230.5 L14 229.5 L17 234 Z" fill="#12a03a"/><circle cx="14.3" cy="226.5" r="1.3" fill="#f5a500"/><rect x="6.5" y="247.5" width="11" height="11" rx="1" fill="#c8c8c8" stroke="#6e6e6e"/><rect x="5.5" y="270.5" width="12" height="12" fill="#fff" stroke="#6e6e6e"/><rect x="5" y="270" width="13" height="4.5" fill="#1b74d9"/><path d="M9.5 270 V283 M13.5 270 V283 M5 278.5 H18" stroke="#6e6e6e" stroke-width="1"/><path d="M9.5 270 V274.5 M13.5 270 V274.5" stroke="#9cc4f0" stroke-width="1"/><rect x="5.5" y="296.5" width="14" height="10" fill="#fff" stroke="#6e6e6e"/><path d="M12.5 296.5 V306.5" stroke="#6e6e6e"/><text x="9" y="305" font-family="Liberation Sans" font-weight="bold" font-size="8" fill="#1b74d9" text-anchor="middle">a</text><text x="16" y="305" font-family="Liberation Sans" font-weight="bold" font-size="8" fill="#1b74d9" text-anchor="middle">b</text><path d="M9 329 L15 335" stroke="#777" stroke-width="1.2"/><circle cx="8" cy="328" r="1.6" fill="#fff" stroke="#12a03a" stroke-width="1.1"/><circle cx="16" cy="336" r="1.6" fill="#fff" stroke="#12a03a" stroke-width="1.1"/><path d="M10 362 L18 354 V362 Z" fill="#1b74d9"/><rect x="12" y="354" width="6" height="8" fill="#1b74d9"/><circle cx="9" cy="354" r="4" fill="#12a03a"/><rect x="4.5" y="374.5" width="14" height="11" rx="1" fill="#fff" stroke="#6e6e6e"/><path d="M7.5 376 V384 M9.5 376 V382 M11.5 376 V382 M13.5 376 V382 M15.5 376 V384" stroke="#6e6e6e" stroke-width="0.9"/><rect x="5.5" y="411.5" width="3" height="5.5" fill="#e8616a" stroke="#d0121b"/><rect x="10.5" y="409.5" width="3" height="7.5" fill="#6ea8ea" stroke="#1b74d9"/><rect x="15.5" y="405.5" width="3" height="11.5" fill="#5dbf73" stroke="#12a03a"/><circle cx="11.5" cy="435.5" r="5.8" fill="#fff" stroke="#6e6e6e" stroke-width="1"/><circle cx="11.5" cy="435.5" r="4.6" fill="none" stroke="#ccc" stroke-width="0.6"/><path d="M11.5 430 V435.5" stroke="#d0121b" stroke-width="1.3"/><circle cx="11.5" cy="435.7" r="1.3" fill="#d0121b"/><rect x="6" y="453" width="12" height="12" rx="1" fill="#1b74d9"/><path d="M6 453 H18 V458 L15 460 L12 457.5 L9 461 L6 459 Z" fill="#12a03a"/><path d="M6 459.5 L9 461.5 L12 458 L15 460.5 L18 458.5" stroke="#fff" stroke-width="1" fill="none"/><rect x="6" y="477" width="12" height="12" rx="1" fill="#1b74d9"/><path d="M14.5 480 H9.3 L12 483 L9.3 486 H14.5" stroke="#fff" stroke-width="1.3" fill="none"/><rect x="7.5" y="501.5" width="9" height="11" rx="1" fill="#fff" stroke="#6e6e6e"/><rect x="10" y="500" width="4" height="2.5" rx="1" fill="#1b74d9"/><path d="M9.5 505.5 H14.5 M9.5 507.5 H14.5 M9.5 509.5 H14.5" stroke="#999" stroke-width="0.9"/><rect x="5.5" y="531.5" width="12" height="12" rx="1" fill="#fff" stroke="#1b74d9" stroke-width="1.2"/><path d="M5.5 534.5 H17.5 M5.5 537.5 H17.5 M5.5 540.5 H17.5 M14.5 531.5 V543.5" stroke="#1b74d9" stroke-width="1.2"/><rect x="6.3" y="532.3" width="8" height="2" fill="#fff"/><path d="M7.5 556.5 H14 L16.5 559 V567.5 H7.5 Z" fill="#fff" stroke="#6e6e6e"/><path d="M9 559.5 H13.5 M9 561.5 H13.5 M9 563.5 H12" stroke="#999" stroke-width="0.9"/><circle cx="16.5" cy="566.5" r="3.6" fill="#1b74d9"/><rect x="16" y="565.5" width="1.1" height="3" fill="#fff"/><rect x="16" y="563.7" width="1.1" height="1" fill="#fff"/><path d="M5 583.5 L8 585.5 L5 587.5 Z" fill="#1b74d9"/><path d="M9.5 580 V584.5 H18.5 V580 M9.5 580.5 H18.5" stroke="#6e6e6e" stroke-width="1.1" fill="none"/><path d="M9.5 592.5 V586.5 H16 L18.5 589 V592.5 H9.5" stroke="#6e6e6e" stroke-width="1.1" fill="none"/><rect x="9" y="581" width="10" height="3" fill="#fff"/><path d="M11.5 604 V615" stroke="#888" stroke-width="1"/><rect x="4.5" y="606.5" width="14" height="2.6" rx="0.5" fill="#fff" stroke="#1b74d9" stroke-width="1.3"/><rect x="4.5" y="610.5" width="14" height="2.6" rx="0.5" fill="#fff" stroke="#1b74d9" stroke-width="1.3"/><circle cx="11.5" cy="603.3" r="1.4" fill="#fff" stroke="#12a03a" stroke-width="1.1"/><circle cx="11.5" cy="615.5" r="1.4" fill="#fff" stroke="#12a03a" stroke-width="1.1"/><path d="M6.5 627 H17.5 M6.5 639.5 H17.5 M6.5 627 V639.5 M17.5 627 V639.5" stroke="#999" stroke-width="1"/><rect x="4.5" y="630" width="15" height="2.6" rx="0.5" fill="#fff" stroke="#1b74d9" stroke-width="1.3"/><rect x="4.5" y="634" width="15" height="2.6" rx="0.5" fill="#fff" stroke="#1b74d9" stroke-width="1.3"/><circle cx="6.5" cy="627" r="1.4" fill="#fff" stroke="#12a03a" stroke-width="1.1"/><circle cx="17.5" cy="627" r="1.4" fill="#fff" stroke="#12a03a" stroke-width="1.1"/><circle cx="6.5" cy="639.5" r="1.4" fill="#fff" stroke="#12a03a" stroke-width="1.1"/><circle cx="17.5" cy="639.5" r="1.4" fill="#fff" stroke="#12a03a" stroke-width="1.1"/><rect x="87.5" y="242.5" width="11" height="13" rx="1" fill="#fff" stroke="#6e6e6e"/><path d="M89.5 243 V255.5 M96.5 243 V255.5 M88 245.5 H98 M88 252.5 H98" stroke="#b0b0b0" stroke-width="1"/><rect x="91" y="241" width="4" height="2" rx="1" fill="#6e6e6e"/><rect x="90" y="246" width="6" height="2.2" fill="#d40000"/><rect x="87.5" y="307.5" width="11" height="13" rx="1" fill="#fff" stroke="#6e6e6e"/><path d="M89.5 308 V320.5 M96.5 308 V320.5 M88 310.5 H98 M88 317.5 H98" stroke="#b0b0b0" stroke-width="1"/><rect x="90" y="311" width="6" height="2.2" fill="#d40000"/><rect x="87.5" y="372.5" width="11" height="2.5" rx="1.2" fill="#fff" stroke="#d40000" stroke-width="1.2"/><path d="M89.5 377.5 H101 M89.5 379.5 H101" stroke="#6e6e6e" stroke-width="1"/><rect x="87.5" y="381.5" width="11" height="2.5" rx="1.2" fill="#fff" stroke="#b0b0b0" stroke-width="1.1"/><rect x="87.5" y="415.5" width="11" height="13" rx="1" fill="#fff" stroke="#6e6e6e"/><path d="M89.5 416 V428.5 M96.5 416 V428.5 M88 418.5 H98 M88 425.5 H98" stroke="#b0b0b0" stroke-width="1"/><rect x="89.9" y="418.9" width="6.2" height="6.2" fill="#fff"/><path d="M91 420.5 H95 M91 422.5 H95 M91 424.5 H95" stroke="#6e6e6e" stroke-width="1"/><path d="M748.5 392 V399.5 Q752.5 401.5 756.5 399.5 V392" fill="#f0b400" stroke="#8a6000" stroke-width="0.9"/><ellipse cx="752.5" cy="392" rx="4" ry="1.5" fill="#ffd24d" stroke="#8a6000" stroke-width="0.9"/><rect x="1106.5" y="159.5" width="9" height="12" rx="1" fill="#fff" stroke="#6e6e6e"/><rect x="1109" y="158" width="4" height="2.5" rx="1" fill="#6e6e6e"/><path d="M1108.5 163.5 H1113.5 M1108.5 165.5 H1113.5 M1108.5 167.5 H1113.5" stroke="#999" stroke-width="0.9"/><rect x="1107.5" y="179.5" width="10" height="7" rx="1" fill="#fff" stroke="#6e6e6e"/><rect x="1104.5" y="181.5" width="11" height="7" rx="1" fill="#fff" stroke="#6e6e6e"/><rect x="1104.5" y="199.5" width="9" height="10" fill="#fff" stroke="#aaa"/><rect x="1106.5" y="197.5" width="9" height="10" fill="#fff" stroke="#6e6e6e"/><path d="M1110 205 L1117 197" stroke="#888" stroke-width="0.8"/><path d="M1109 206.5 L1111.5 203 L1112.5 204 Z" fill="#d40000" stroke="#d40000" stroke-width="1"/><polygon points="1115.80,220.00 1114.13,221.38 1114.34,223.54 1112.18,223.33 1110.80,225.00 1109.42,223.33 1107.26,223.54 1107.47,221.38 1105.80,220.00 1107.47,218.62 1107.26,216.46 1109.42,216.67 1110.80,215.00 1112.18,216.67 1114.34,216.46 1114.13,218.62" fill="#6e6e6e" stroke="#6e6e6e" stroke-width="1.2" stroke-linejoin="round"/><circle cx="1110.8" cy="220" r="1.90" fill="#fff"/><path d="M1290.5 170.0 L1296.0 164.5 V170.0 Z" fill="#6e6e6e"/><rect x="1305.5" y="159.5" width="9" height="12" rx="1" fill="#fff" stroke="#6e6e6e"/><rect x="1308" y="158" width="4" height="2.5" rx="1" fill="#6e6e6e"/><path d="M1307.5 163.5 H1312.5 M1307.5 165.5 H1312.5 M1307.5 167.5 H1312.5" stroke="#999" stroke-width="0.9"/><rect x="1322.5" y="177.5" width="11" height="13" rx="1" fill="#fff" stroke="#6e6e6e"/><path d="M1324.5 178 V190.5 M1331.5 178 V190.5 M1323 180.5 H1333 M1323 187.5 H1333" stroke="#b0b0b0" stroke-width="1"/><rect x="1323" y="178" width="10" height="2.2" fill="#d40000"/><path d="M1309.5 198.5 L1313.5 202.5 L1309.5 206.5 Z" fill="#6e6e6e"/><rect x="1322.5" y="195.5" width="11" height="13" rx="1" fill="#fff" stroke="#6e6e6e"/><path d="M1324.5 196 V208.5 M1331.5 196 V208.5 M1323 198.5 H1333 M1323 205.5 H1333" stroke="#b0b0b0" stroke-width="1"/><rect x="1325" y="199" width="6" height="2.2" fill="#d40000"/><rect x="1326" y="194" width="4" height="2" rx="1" fill="#6e6e6e"/><path d="M1309.5 216.5 L1313.5 220.5 L1309.5 224.5 Z" fill="#6e6e6e"/><rect x="1322.5" y="213.5" width="11" height="13" rx="1" fill="#fff" stroke="#6e6e6e"/><path d="M1324.5 214 V226.5 M1331.5 214 V226.5 M1323 216.5 H1333 M1323 223.5 H1333" stroke="#b0b0b0" stroke-width="1"/><rect x="1325" y="217" width="6" height="2.2" fill="#d40000"/><path d="M1309.5 234.5 L1313.5 238.5 L1309.5 242.5 Z" fill="#6e6e6e"/><rect x="1322.5" y="232.5" width="11" height="2.5" rx="1.2" fill="#fff" stroke="#d40000" stroke-width="1.2"/><path d="M1324.5 237.5 H1336 M1324.5 239.5 H1336" stroke="#6e6e6e" stroke-width="1"/><rect x="1322.5" y="241.5" width="11" height="2.5" rx="1.2" fill="#fff" stroke="#b0b0b0" stroke-width="1.1"/><rect x="1322.5" y="249.5" width="11" height="13" rx="1" fill="#fff" stroke="#6e6e6e"/><path d="M1324.5 250 V262.5 M1331.5 250 V262.5 M1323 252.5 H1333 M1323 259.5 H1333" stroke="#b0b0b0" stroke-width="1"/><rect x="1324.9" y="252.9" width="6.2" height="6.2" fill="#fff"/><path d="M1326 254.5 H1330 M1326 256.5 H1330 M1326 258.5 H1330" stroke="#6e6e6e" stroke-width="1"/><path d="M1309.5 270.5 L1313.5 274.5 L1309.5 278.5 Z" fill="#6e6e6e"/><rect x="1322.5" y="267.5" width="11" height="13" rx="1" fill="#fff" stroke="#6e6e6e"/><path d="M1324.5 268 V280.5 M1331.5 268 V280.5 M1323 270.5 H1333 M1323 277.5 H1333" stroke="#b0b0b0" stroke-width="1"/><rect x="1323" y="277.8" width="10" height="2.2" fill="#12a03a"/><path d="M1291.5 288.5 L1295.5 292.5 L1291.5 296.5 Z" fill="#6e6e6e"/><rect x="1303.5" y="288.5" width="9" height="10" fill="#fff" stroke="#aaa"/><rect x="1305.5" y="286.5" width="9" height="10" fill="#fff" stroke="#6e6e6e"/><path d="M1309 294 L1316 286" stroke="#888" stroke-width="0.8"/><path d="M1308 295.5 L1310.5 292 L1311.5 293 Z" fill="#d40000" stroke="#d40000" stroke-width="1"/><rect x="1303.5" y="306.5" width="9" height="10" fill="#fff" stroke="#aaa"/><rect x="1305.5" y="304.5" width="10" height="10" fill="#fff" stroke="#6e6e6e"/><path d="M1308 308 H1316 M1312 308 V314" stroke="#1b74d9" stroke-width="2.2"/><polygon points="1315.00,328.00 1313.33,329.38 1313.54,331.54 1311.38,331.33 1310.00,333.00 1308.62,331.33 1306.46,331.54 1306.67,329.38 1305.00,328.00 1306.67,326.62 1306.46,324.46 1308.62,324.67 1310.00,323.00 1311.38,324.67 1313.54,324.46 1313.33,326.62" fill="#6e6e6e" stroke="#6e6e6e" stroke-width="1.2" stroke-linejoin="round"/><circle cx="1310" cy="328" r="1.90" fill="#fff"/><path d="M1490.5 170.0 L1496.0 164.5 V170.0 Z" fill="#6e6e6e"/><rect x="1502.5" y="160.5" width="15" height="11" fill="#fff" stroke="#6a7d96"/><rect x="1502" y="160" width="16" height="3" fill="#f08a24"/><path d="M1507.5 163 V172 M1512.5 163 V172 M1503 166.5 H1517 M1503 169.5 H1517" stroke="#8aa0b8" stroke-width="1"/><path d="M1509 180.5 L1513 184.5 L1509 188.5 Z" fill="#6e6e6e"/><rect x="1520.5" y="178.5" width="15" height="11" fill="#fff" stroke="#6a7d96"/><rect x="1520" y="178" width="16" height="3" fill="#f08a24"/><path d="M1525.5 181 V190 M1530.5 181 V190 M1521 184.5 H1535 M1521 187.5 H1535" stroke="#8aa0b8" stroke-width="1"/><rect x="1502.5" y="196.5" width="15" height="11" fill="#fff" stroke="#6a7d96"/><rect x="1502" y="196" width="16" height="3" fill="#f08a24"/><text x="1510" y="207" font-family="Liberation Sans" font-weight="bold" font-size="9" fill="#1b74d9" text-anchor="middle">?</text><rect x="1097.5" y="800.5" width="12" height="12" fill="#fff" stroke="#6e6e6e"/><rect x="1097" y="800" width="13" height="4.5" fill="none" stroke="#1b74d9"/><path d="M1101.5 800 V813 M1105.5 800 V808 M1097 808.5 H1106" stroke="#6e6e6e"/><path d="M1101.5 800.5 V804.5 M1105.5 800.5 V804.5" stroke="#1b74d9"/><polygon points="1112.10,810.50 1110.89,811.49 1111.05,813.05 1109.49,812.89 1108.50,814.10 1107.51,812.89 1105.95,813.05 1106.11,811.49 1104.90,810.50 1106.11,809.51 1105.95,807.95 1107.51,808.11 1108.50,806.90 1109.49,808.11 1111.05,807.95 1110.89,809.51" fill="#1b74d9" stroke="#1b74d9" stroke-width="1.2" stroke-linejoin="round"/><circle cx="1108.5" cy="810.5" r="1.37" fill="#fff"/><rect x="1193.5" y="801.5" width="7" height="10" fill="#fff" stroke="#6e6e6e"/><rect x="1190.5" y="803.5" width="7" height="10" fill="#fff" stroke="#6e6e6e"/><path d="M1192.5 812 V809 M1194.5 812 V807 M1196.5 812 V805" stroke="#1b74d9" stroke-width="1"/><path d="M35.5 847 L49 833.2 V847 Z" fill="#f5b400"/><path d="M40.5 845 L47 838.5 V845 Z" fill="#0072c6"/><path d="M36 846 H48" stroke="#fff6c0" stroke-width="0.8" stroke-dasharray="1 1"/><path d="M38 836.5 L44.5 843" stroke="#3b8de0" stroke-width="2"/><rect x="118.5" y="834.5" width="13" height="11" fill="#fff" stroke="#6e6e6e"/><rect x="118.5" y="834.5" width="13" height="2.2" fill="#6e6e6e"/><path d="M125 835.6 H130.5" stroke="#fff" stroke-width="0.9" stroke-dasharray="1 1"/><path d="M123 838.5 L121 840.5 L123 842.5 M127 838.5 L129 840.5 L127 842.5" stroke="#555" stroke-width="1" fill="none"/><rect x="42" y="900.5" width="7" height="7" fill="#1b74d9"/><rect x="46" y="904" width="8" height="8" fill="#12a03a"/><path d="M42.5 909 V911.5 H45 M51 900.5 H53.5 V903" stroke="#444" stroke-width="1" fill="none"/><path d="M165.5 904 H170.5 L168 907 Z" fill="#333"/><path d="M324.5 904 H329.5 L327 907 Z" fill="#333"/><path d="M185 900.5 H193 L189 905.5 Z" fill="#1b74d9"/><path d="M189 912 H197 L193 905.5 Z" fill="#12a03a"/><path d="M189 905 L192 908" stroke="#555" stroke-width="0.8"/><path d="M343.5 901.5 L352.5 910.5 M352.5 901.5 L343.5 910.5" stroke="#d9252a" stroke-width="1.8"/><circle cx="429.5" cy="906.5" r="5.5" fill="#acacac"/><path d="M429.5 909.5 V903.5 M427.5 905.5 L429.5 903.5 L431.5 905.5" stroke="#fff" stroke-width="1" fill="none"/><circle cx="517.5" cy="906.5" r="5.5" fill="#acacac"/><path d="M517.5 903.5 V909.5 M515.5 907.5 L517.5 909.5 L519.5 907.5" stroke="#fff" stroke-width="1" fill="none"/><path d="M245.5 947.5 L249.5 951.5 L253.5 947.5" stroke="#707070" stroke-width="1.3" fill="none"/><path d="M401.5 949.5 L404 952.5 L409.5 945.5" stroke="#333" stroke-width="1.4" fill="none"/><path d="M45 990 H54 V993.8 H48 L50.8 998.8 H45 Z" fill="#1b74d9"/><path d="M50.2 995 H59.2 L54.7 1002 Z" fill="#12a03a"/><rect x="203.7" y="990.7" width="12.6" height="10.6" rx="1" fill="#fff" stroke="#6a6a6a" stroke-width="1.3"/><rect x="203.5" y="990.5" width="13" height="2.4" fill="#6a6a6a"/><circle cx="211.5" cy="991.6" r="0.55" fill="#fff"/><circle cx="213.5" cy="991.6" r="0.55" fill="#fff"/><circle cx="215.5" cy="991.6" r="0.55" fill="#fff"/><path d="M208 994.3 L206 996.8 L208 999.3" stroke="#555" stroke-width="1.3" fill="none"/><circle cx="214" cy="999.9" r="4" fill="#d40000"/><path d="M212.4 998.3 L215.6 1001.5 M215.6 998.3 L212.4 1001.5" stroke="#fff" stroke-width="1.1"/></svg>
</body></html>
